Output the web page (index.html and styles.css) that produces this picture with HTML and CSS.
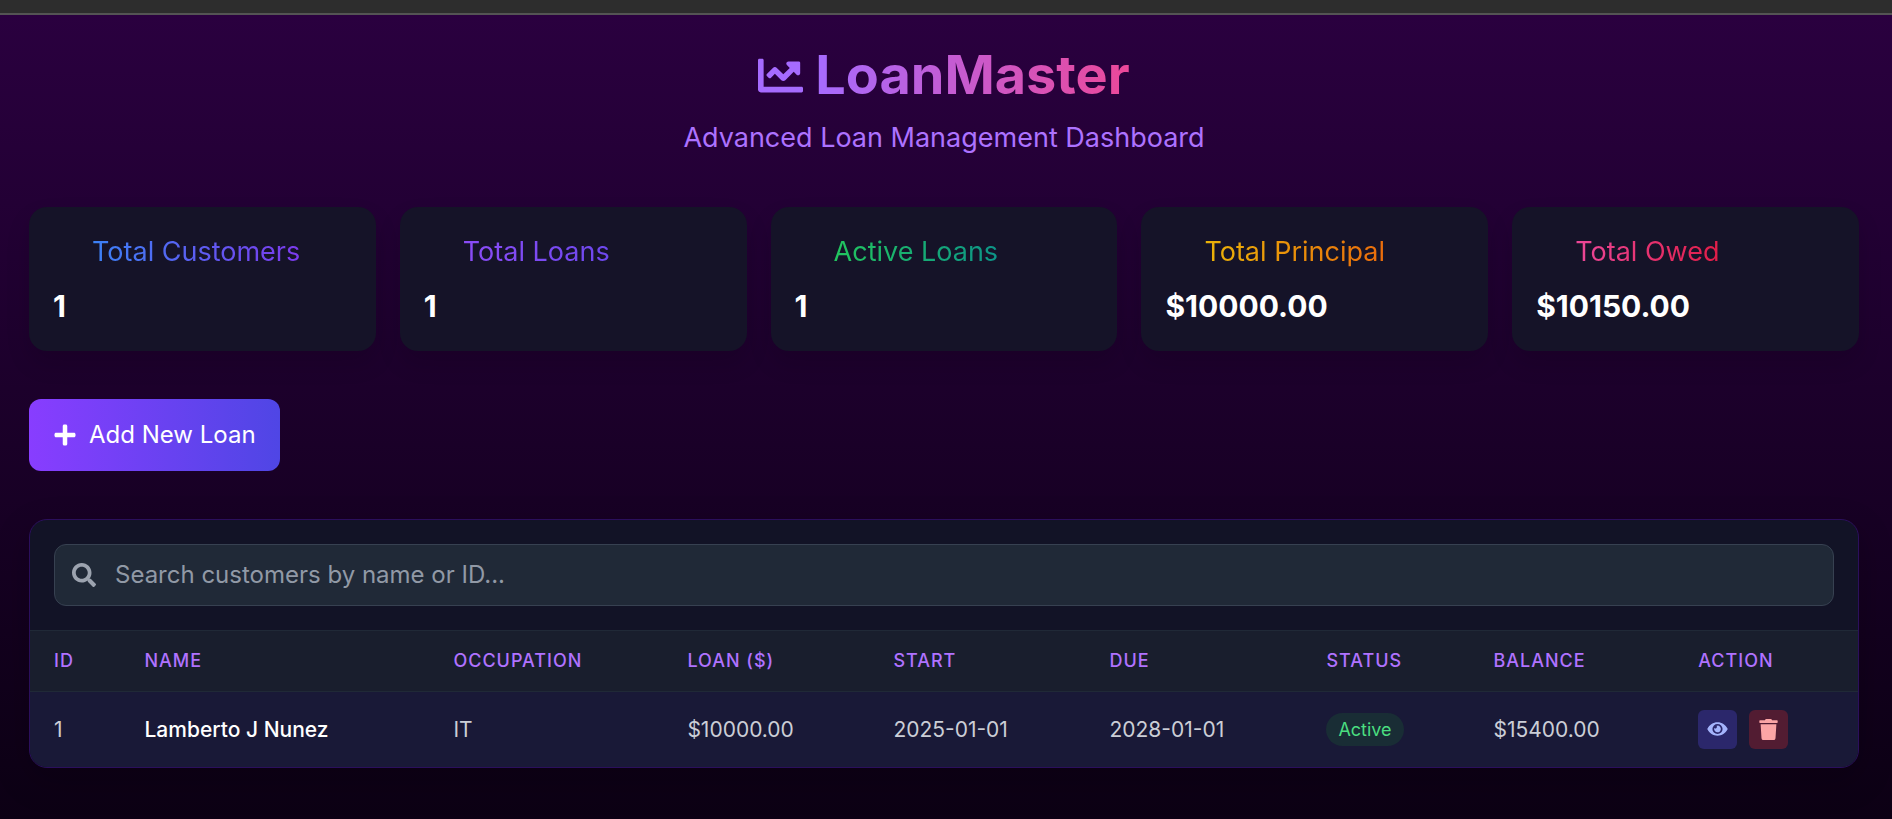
FILE: index.html
```html
<!DOCTYPE html>
<html lang="en">
<head>
<meta charset="utf-8">
<title>LoanMaster</title>
<link rel="stylesheet" href="styles.css">
</head>
<body>
<div class="top-strip"></div>
<main class="page">
  <header class="header">
    <h1 class="brand">
      <svg class="brand-icon" viewBox="0 0 512 512" aria-hidden="true"><path d="M496 384H64V80c0-8.84-7.16-16-16-16H16C7.16 64 0 71.16 0 80v336c0 17.67 14.33 32 32 32h464c8.84 0 16-7.16 16-16v-32c0-8.84-7.16-16-16-16zM464 96H345.94c-21.38 0-32.09 25.85-16.97 40.97l32.4 32.4L288 242.75l-73.37-73.37c-12.5-12.5-32.76-12.5-45.25 0l-68.69 68.69c-6.25 6.25-6.25 16.38 0 22.63l22.62 22.62c6.25 6.25 16.38 6.25 22.63 0L192 237.25l73.37 73.37c12.5 12.5 32.76 12.5 45.25 0l96-96 32.4 32.4c15.12 15.12 40.97 4.41 40.97-16.97V112c.01-8.84-7.15-16-16-16z"/></svg>
      <span class="brand-name">LoanMaster</span>
    </h1>
    <p class="tagline">Advanced Loan Management Dashboard</p>
  </header>

  <section class="stats">
    <article class="stat"><h2 class="stat-label customers">Total Customers</h2><p class="stat-value">1</p></article>
    <article class="stat"><h2 class="stat-label loans">Total Loans</h2><p class="stat-value">1</p></article>
    <article class="stat"><h2 class="stat-label active">Active Loans</h2><p class="stat-value">1</p></article>
    <article class="stat"><h2 class="stat-label principal">Total Principal</h2><p class="stat-value">$10000.00</p></article>
    <article class="stat"><h2 class="stat-label owed">Total Owed</h2><p class="stat-value">$10150.00</p></article>
  </section>

  <button class="add-button" type="button">
    <svg class="add-icon" viewBox="0 0 448 512" aria-hidden="true"><path d="M416 208H272V64c0-17.67-14.33-32-32-32h-32c-17.67 0-32 14.33-32 32v144H32c-17.67 0-32 14.33-32 32v32c0 17.67 14.33 32 32 32h144v144c0 17.67 14.33 32 32 32h32c17.67 0 32-14.33 32-32V304h144c17.67 0 32-14.33 32-32v-32c0-17.67-14.33-32-32-32z"/></svg>
    Add New Loan
  </button>

  <section class="panel">
    <div class="search-area">
      <label class="search">
        <svg class="search-icon" viewBox="0 0 512 512" aria-hidden="true"><path d="M505 442.7L405.3 343c-4.5-4.5-10.6-7-17-7H372c27.6-35.3 44-79.7 44-128C416 93.1 322.9 0 208 0S0 93.1 0 208s93.1 208 208 208c48.3 0 92.7-16.4 128-44v16.3c0 6.4 2.5 12.5 7 17l99.7 99.7c9.4 9.4 24.6 9.4 33.9 0l28.3-28.3c9.4-9.4 9.4-24.6.1-34zM208 336c-70.7 0-128-57.2-128-128 0-70.7 57.2-128 128-128 70.7 0 128 57.2 128 128 0 70.7-57.2 128-128 128z"/></svg>
        <input class="search-input" type="text" aria-label="Search customers" placeholder="Search customers by name or ID...">
      </label>
    </div>
    <table class="loans-table">
      <colgroup>
        <col class="col-id"><col class="col-name"><col class="col-occupation"><col class="col-loan"><col class="col-start"><col class="col-due"><col class="col-status"><col class="col-balance"><col class="col-action">
      </colgroup>
      <thead>
        <tr><th>ID</th><th>Name</th><th>Occupation</th><th>Loan ($)</th><th>Start</th><th>Due</th><th>Status</th><th>Balance</th><th>Action</th></tr>
      </thead>
      <tbody>
        <tr>
          <td>1</td><td class="name">Lamberto J Nunez</td><td>IT</td><td>$10000.00</td><td>2025-01-01</td><td>2028-01-01</td>
          <td><span class="badge">Active</span></td><td>$15400.00</td>
          <td>
            <div class="actions">
              <button class="action view" type="button" aria-label="View"><svg class="eye-icon" viewBox="0 0 576 512" aria-hidden="true"><path d="M572.52 241.4C518.29 135.59 410.93 64 288 64S57.68 135.64 3.48 241.41a32.35 32.35 0 0 0 0 29.19C57.71 376.41 165.07 448 288 448s230.32-71.64 284.52-177.41a32.35 32.35 0 0 0 0-29.19zM288 400a144 144 0 1 1 144-144 143.93 143.93 0 0 1-144 144zm0-240a95.31 95.31 0 0 0-25.31 3.79 47.85 47.85 0 0 1-66.9 66.9A95.78 95.78 0 1 0 288 160z"/></svg></button>
              <button class="action delete" type="button" aria-label="Delete"><svg class="trash-icon" viewBox="0 0 448 512" aria-hidden="true"><path d="M432 32H312l-9.4-18.7A24 24 0 0 0 281.1 0H166.8a23.72 23.72 0 0 0-21.4 13.3L136 32H16A16 16 0 0 0 0 48v32a16 16 0 0 0 16 16h416a16 16 0 0 0 16-16V48a16 16 0 0 0-16-16zM53.2 467a48 48 0 0 0 47.9 45h245.8a48 48 0 0 0 47.9-45L416 128H32z"/></svg></button>
            </div>
          </td>
        </tr>
      </tbody>
    </table>
  </section>
</main>
</body>
</html>
```
FILE: styles.css
```css
* { box-sizing: border-box; }

body {
  margin: 0;
  min-height: 100vh;
  display: flex;
  flex-direction: column;
  background: #0c0014;
  color: #fff;
  font-family: Inter, "Liberation Sans", sans-serif;
  font-size: 21px;
}

h1, h2, p { margin: 0; }
button, input { font-family: inherit; }
svg { display: block; fill: currentColor; }

.top-strip {
  height: 15px;
  background: #2d2d2d;
  border-bottom: 2px solid #545454;
}

.page {
  flex: 1;
  padding: 27px 33px 50px 29px;
  background: linear-gradient(#2a003f, #0c0014);
}

.header {
  display: flex;
  flex-direction: column;
  align-items: center;
  gap: 12px;
  margin-bottom: 51px;
}

.brand {
  display: flex;
  align-items: center;
  gap: 12px;
  font-size: 54px;
  line-height: 66px;
  font-weight: 700;
}

.brand-icon { width: 45px; height: 45px; color: #a66bff; }

.brand-name {
  color: transparent;
  background: linear-gradient(90deg, #a66bff, #ec4899);
  background-clip: text;
  -webkit-background-clip: text;
}

.tagline {
  font-size: 27px;
  line-height: 36px;
  color: #ad72ff;
}

.stats {
  display: grid;
  grid-template-columns: repeat(5, 1fr);
  gap: 24px;
  margin-bottom: 48px;
}

.stat {
  display: flex;
  flex-direction: column;
  align-items: flex-start;
  gap: 12px;
  padding: 24px;
  border-radius: 18px;
  background: #151328;
  box-shadow: 0 12px 24px rgba(0, 0, 0, 0.12);
}

.stat-label {
  margin-left: 39px;
  font-size: 27px;
  line-height: 42px;
  font-weight: 400;
  color: transparent;
  background-clip: text;
  -webkit-background-clip: text;
}

.customers { background-image: linear-gradient(90deg, #3b82f6, #7c3aed); }
.loans { background-image: linear-gradient(90deg, #8b4cf6, #6d48ee); }
.active { background-image: linear-gradient(90deg, #22c55e, #0d9488); }
.principal { background-image: linear-gradient(90deg, #eab308, #ea6c0c); }
.owed { background-image: linear-gradient(90deg, #ec4899, #e11d48); }

.stat-value { font-size: 30px; line-height: 42px; font-weight: 700; }

.add-button {
  display: flex;
  align-items: center;
  gap: 12px;
  margin-bottom: 48px;
  padding: 18px 24px;
  border: 0;
  border-radius: 12px;
  background: linear-gradient(90deg, #883dff, #4f46e5);
  color: #fff;
  font-size: 24px;
  line-height: 36px;
}

.add-icon { width: 24px; height: 24px; }

.panel {
  overflow: hidden;
  border: 1px solid #2b0f5c;
  border-radius: 18px;
  background: #121326;
  box-shadow: 0 12px 36px rgba(0, 0, 0, 0.2);
}

.search-area { padding: 24px; }

.search {
  display: flex;
  align-items: center;
  gap: 19px;
  padding: 0 17px 1px;
  border: 1px solid #374151;
  border-radius: 12px;
  background: #202937;
}

.search-icon { width: 24px; height: 24px; color: #9ca3af; }

.search-input {
  flex: 1;
  height: 59px;
  padding: 0;
  border: 0;
  outline: 0;
  background: transparent;
  color: #fff;
  font-size: 24px;
}

.search-input::placeholder { color: #9199a6; opacity: 1; }

.loans-table { width: 100%; table-layout: fixed; border-collapse: collapse; }

.col-id { width: 4.95%; }
.col-name { width: 16.9%; }
.col-occupation { width: 12.8%; }
.col-loan { width: 11.27%; }
.col-start { width: 11.82%; }
.col-due { width: 11.87%; }
.col-status { width: 9.14%; }
.col-balance { width: 11.2%; }

.loans-table th {
  height: 61px;
  padding: 0 24px 2px;
  border-top: 1px solid #202937;
  border-bottom: 1px solid #202937;
  background: #191e2d;
  color: #b072ff;
  font-size: 18px;
  font-weight: 500;
  letter-spacing: 1px;
  text-align: left;
  text-transform: uppercase;
}

.loans-table td {
  height: 75px;
  padding: 0 24px;
  background: #191937;
  color: #cbced6;
  white-space: nowrap;
}

.loans-table .name { color: #fff; font-weight: 500; }

.badge {
  display: inline-block;
  padding: 3px 12px;
  border-radius: 18px;
  background: #192d35;
  color: #4ade80;
  font-size: 18px;
  line-height: 27px;
  vertical-align: middle;
}

.actions { display: flex; gap: 12px; }

.action {
  display: grid;
  place-items: center;
  width: 39px;
  height: 39px;
  padding: 0;
  border: 0;
  border-radius: 6px;
}

.view { background: #2b276b; color: #a5b4fc; }
.delete { background: #521c32; color: #fca5a5; }
.eye-icon { width: 21px; height: 18px; }
.trash-icon { width: 19px; height: 21px; }
```
